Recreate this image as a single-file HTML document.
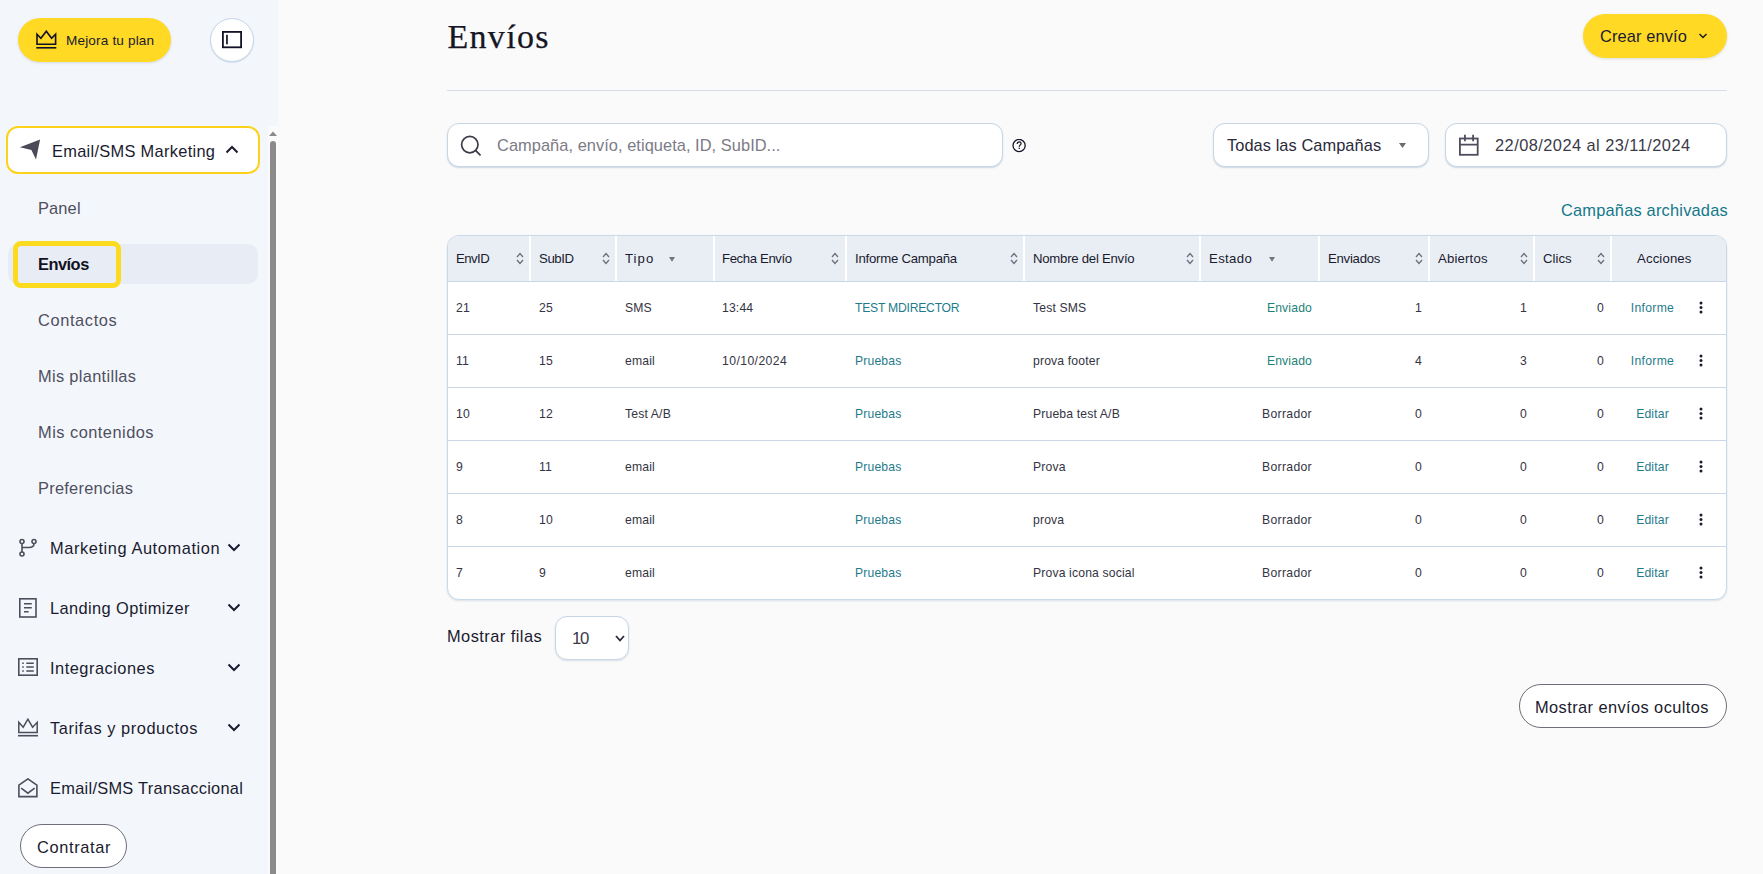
<!DOCTYPE html>
<html lang="es">
<head>
<meta charset="utf-8">
<title>Envíos</title>
<style>
*{box-sizing:border-box;margin:0;padding:0}
html,body{width:1763px;height:874px;overflow:hidden}
body{font-family:"Liberation Sans",sans-serif;background:#fafafa;color:#1b1b2f;position:relative}
.abs{position:absolute}
/* sidebar */
#side{position:absolute;left:0;top:0;width:278px;height:874px;background:#f3f7fc}
#plan{left:18px;top:18px;width:153px;height:44px;border-radius:22px;background:#ffd923;box-shadow:0 1px 3px rgba(0,0,0,.12)}
#plan span{position:absolute;left:48px;top:15px;font-size:13.6px;letter-spacing:.15px;color:#1b1b2f;white-space:nowrap}
#plan svg{position:absolute;left:18px;top:12px}
#tog{left:210px;top:18px;width:44px;height:44px;border-radius:50%;background:#fff;border:1px solid #c6d7e6;box-shadow:0 1px 1px rgba(140,170,200,.35)}
#tog svg{position:absolute;left:11px;top:12px}
#emk{left:6px;top:126px;width:254px;height:48px;border:2px solid #fdd21b;border-radius:12px;background:#fff}
.t16{font-size:16.4px;letter-spacing:.3px;white-space:nowrap}
.sub{position:absolute;left:38px;font-size:16.4px;letter-spacing:.4px;color:#4f4f60;white-space:nowrap}
#act{left:8px;top:244px;width:250px;height:40px;border-radius:10px;background:#e8edf5}
#focus{left:13px;top:241px;width:108px;height:47px;border:5px solid #fcdb1f;border-radius:8px}
.sec{position:absolute;left:0;width:260px;height:30px}
.sec .ic{position:absolute;left:18px;top:5px}
.sec .lb{position:absolute;left:50px;top:6px;font-size:16.4px;letter-spacing:.55px;color:#1b1b2f;white-space:nowrap}
.sec .chev{position:absolute;left:227px;top:10px}
#contr{left:20px;top:824px;width:107px;height:44px;border-radius:22px;background:#fff;border:1px solid #6e6e78}
#contr span{position:absolute;left:16px;top:13px;font-size:16.4px;letter-spacing:.65px;color:#1b1b2f}
#track{left:268px;top:126px;width:10px;height:748px;background:#fbfbfb}
#thumb{left:270px;top:141px;width:6px;height:740px;border-radius:3px;background:#8a8a8a}
/* main */
#title{left:447.5px;top:18px;-webkit-text-stroke:.25px #161625;font-family:"Liberation Serif",serif;font-size:34px;color:#161625;white-space:nowrap;letter-spacing:1.3px}
#crear{left:1583px;top:14px;width:144px;height:44px;border-radius:22px;background:#ffd923;box-shadow:0 1px 3px rgba(0,0,0,.12)}
#crear span{position:absolute;left:17px;top:13px}
#crear svg{position:absolute;left:115px;top:19px}
#hr{left:447px;top:90px;width:1280px;height:1px;background:#d6dee8}
.box{position:absolute;top:123px;height:44px;background:#fff;border:1px solid #c6d6e6;border-radius:12px;box-shadow:0 1px 1.5px rgba(120,150,180,.35)}
#search{left:447px;width:556px}
#camp{left:1213px;width:216px}
#date{left:1445px;width:282px}
#arch{left:1561px;top:201px;color:#13788a;letter-spacing:.2px}
/* table */
#tbl{left:447px;top:235px;width:1280px;height:365px;background:#fff;border:1px solid #c9d9e7;border-radius:12px;overflow:hidden;box-shadow:0 1px 2px rgba(120,150,180,.25)}
#thead{position:absolute;left:0;top:0;width:100%;height:46px;background:#e9eef5;border-bottom:1px solid #c9d7e6}
.sep{position:absolute;top:0;width:2px;height:45px;background:#fff}
.th{position:absolute;top:15px;font-size:13.2px;color:#1b1b2f;white-space:nowrap}
.row{position:absolute;left:0;width:100%;height:53px;border-bottom:1px solid #c9d7e6}
.td{position:absolute;top:19px;font-size:12.2px;letter-spacing:.15px;color:#343443;white-space:nowrap}
.link{color:#1f7b8c}
.ok{color:#1d8277}
</style>
</head>
<body>
<div id="side">
  <div id="plan" class="abs">
    <svg width="21" height="20" viewBox="0 0 21 20"><path d="M1 4.2 L4.9 8.2 L10.3 1.2 L15.6 8.2 L19.6 4.2 V14.2 H1 Z" fill="none" stroke="#121226" stroke-width="1.6" stroke-linejoin="miter" stroke-miterlimit="10"/><rect x="0.3" y="17" width="20" height="1.6" fill="#121226"/></svg>
    <span>Mejora tu plan</span>
  </div>
  <div id="tog" class="abs">
    <svg width="21" height="19" viewBox="0 0 21 19"><rect x="0.9" y="0.9" width="18.2" height="15.4" fill="none" stroke="#121226" stroke-width="1.8"/><rect x="4.1" y="3.8" width="1.7" height="9.5" fill="#121226"/></svg>
  </div>
  <div id="emk" class="abs">
    <svg class="abs" style="left:10px;top:11px" width="24" height="22" viewBox="0 0 24 22"><path d="M1.9 8.3 L22.1 0.6 L18 20.5 L13.4 10.9 Z" fill="#4a4a58"/></svg>
    <span class="abs t16" style="left:44px;top:14px;color:#1b1b2f">Email/SMS Marketing</span>
    <svg class="abs" style="left:217px;top:17px" width="14" height="9" viewBox="0 0 14 9"><path d="M1.5 7.5 L7 2 L12.5 7.5" fill="none" stroke="#1b1b2f" stroke-width="2"/></svg>
  </div>
  <span class="sub" style="top:199px;letter-spacing:.15px">Panel</span>
  <div id="act" class="abs"></div>
  <div id="focus" class="abs"></div>
  <span class="sub" style="top:255px;color:#111122;font-weight:700;letter-spacing:-.5px">Envíos</span>
  <span class="sub" style="top:311px;letter-spacing:.62px">Contactos</span>
  <span class="sub" style="top:367px;letter-spacing:.32px">Mis plantillas</span>
  <span class="sub" style="top:423px;letter-spacing:.48px">Mis contenidos</span>
  <span class="sub" style="top:479px;letter-spacing:.26px">Preferencias</span>

  <div class="sec" style="top:533px">
    <svg class="ic" width="20" height="20" viewBox="0 0 20 20"><circle cx="4" cy="3.5" r="2" fill="none" stroke="#4d4d5c" stroke-width="1.6"/><circle cx="16" cy="3.5" r="2" fill="none" stroke="#4d4d5c" stroke-width="1.6"/><circle cx="4" cy="16" r="2" fill="none" stroke="#4d4d5c" stroke-width="1.6"/><path d="M4 5.5 V14 M16 5.5 C16 9 14 9.5 11 9.5 H4" fill="none" stroke="#4d4d5c" stroke-width="1.6"/></svg>
    <span class="lb" style="letter-spacing:.58px">Marketing Automation</span>
    <svg class="chev" width="14" height="9" viewBox="0 0 14 9"><path d="M1.5 1.5 L7 7 L12.5 1.5" fill="none" stroke="#1b1b2f" stroke-width="2"/></svg>
  </div>
  <div class="sec" style="top:593px">
    <svg class="ic" width="20" height="20" viewBox="0 0 20 20"><rect x="1.8" y="0.8" width="16.2" height="18.2" fill="none" stroke="#4d4d5c" stroke-width="1.6"/><path d="M6 5.8 H13.8 M6 9.8 H13.8 M6 13.8 H10.6" stroke="#4d4d5c" stroke-width="1.6"/></svg>
    <span class="lb" style="letter-spacing:.4px">Landing Optimizer</span>
    <svg class="chev" width="14" height="9" viewBox="0 0 14 9"><path d="M1.5 1.5 L7 7 L12.5 1.5" fill="none" stroke="#1b1b2f" stroke-width="2"/></svg>
  </div>
  <div class="sec" style="top:653px">
    <svg class="ic" width="21" height="20" viewBox="0 0 21 20"><rect x="0.8" y="0.8" width="18.4" height="16.4" fill="none" stroke="#4d4d5c" stroke-width="1.6"/><path d="M4.2 5.3 H5.8 M4.2 9.1 H5.8 M4.2 12.9 H5.8 M8.3 5.3 H15.8 M8.3 9.1 H15.8 M8.3 12.9 H15.8" stroke="#4d4d5c" stroke-width="1.5"/></svg>
    <span class="lb" style="letter-spacing:.5px">Integraciones</span>
    <svg class="chev" width="14" height="9" viewBox="0 0 14 9"><path d="M1.5 1.5 L7 7 L12.5 1.5" fill="none" stroke="#1b1b2f" stroke-width="2"/></svg>
  </div>
  <div class="sec" style="top:713px">
    <svg class="ic" width="21" height="20" viewBox="0 0 21 20"><path d="M0.8 4.3 L5.2 9.2 L9.9 1.2 L14.6 9.2 L19.2 4.3 V14.6 H0.8 Z" fill="none" stroke="#4d4d5c" stroke-width="1.5" stroke-miterlimit="10"/><rect x="0" y="16.9" width="20" height="1.6" fill="#4d4d5c"/></svg>
    <span class="lb" style="letter-spacing:.55px">Tarifas y productos</span>
    <svg class="chev" width="14" height="9" viewBox="0 0 14 9"><path d="M1.5 1.5 L7 7 L12.5 1.5" fill="none" stroke="#1b1b2f" stroke-width="2"/></svg>
  </div>
  <div class="sec" style="top:773px">
    <svg class="ic" width="21" height="21" viewBox="0 0 21 21"><path d="M0.9 7.2 L9.9 0.9 L18.9 7.2 V18.6 H0.9 Z" fill="none" stroke="#4d4d5c" stroke-width="1.6" stroke-linejoin="miter"/><path d="M3.2 10.2 L9.9 15.2 L16.6 10.2" fill="none" stroke="#4d4d5c" stroke-width="1.6"/></svg>
    <span class="lb" style="letter-spacing:.28px">Email/SMS Transaccional</span>
  </div>
  <div id="contr" class="abs"><span>Contratar</span></div>
  <div id="track" class="abs"></div>
  <svg class="abs" style="left:269px;top:131px" width="8" height="5" viewBox="0 0 8 5"><path d="M0 5 L4 0.5 L8 5 Z" fill="#8a8a8a"/></svg>
  <div id="thumb" class="abs"></div>
</div>

<div id="main">
  <div id="title" class="abs">Envíos</div>
  <div id="crear" class="abs"><span class="t16" style="letter-spacing:.12px">Crear envío</span>
    <svg width="10" height="6" viewBox="0 0 10 6"><path d="M1.5 1 L5 4.5 L8.5 1" fill="none" stroke="#1b1b2f" stroke-width="1.5"/></svg>
  </div>
  <div id="hr" class="abs"></div>

  <div id="search" class="box">
    <svg class="abs" style="left:12px;top:11px" width="22" height="22" viewBox="0 0 22 22"><circle cx="9.8" cy="9.6" r="8.2" fill="none" stroke="#3c3c48" stroke-width="1.7"/><path d="M15.8 15.6 L20 19.8" stroke="#3c3c48" stroke-width="1.8" stroke-linecap="round"/></svg>
    <span class="abs t16" style="left:49px;top:12px;color:#7b7b86;letter-spacing:.05px">Campaña, envío, etiqueta, ID, SubID...</span>
  </div>
  <svg class="abs" style="left:1012px;top:139px" width="15" height="14" viewBox="0 0 15 14"><circle cx="7.1" cy="6.5" r="6.1" fill="none" stroke="#121226" stroke-width="1.25"/><path d="M5.2 5 C5.2 3.6 6.1 2.9 7.2 2.9 C8.3 2.9 9.1 3.6 9.1 4.6 C9.1 5.9 7.3 6 7.3 7.7" fill="none" stroke="#121226" stroke-width="1.2"/><rect x="6.6" y="8.7" width="1.3" height="1.2" fill="#121226"/></svg>
  <div id="camp" class="box">
    <span class="abs t16" style="left:13px;top:12px;color:#2a2a3a;letter-spacing:.06px">Todas las Campañas</span>
    <svg class="abs" style="left:185px;top:19px" width="7" height="5" viewBox="0 0 7 5"><path d="M0 0 H7 L3.5 5 Z" fill="#6b6b76"/></svg>
  </div>
  <div id="date" class="box">
    <svg class="abs" style="left:13px;top:10px" width="22" height="24" viewBox="0 0 22 24"><rect x="0.9" y="4.5" width="17.8" height="16.3" fill="none" stroke="#4d4d5c" stroke-width="1.8"/><path d="M0.9 10.7 H18.7 M5.9 0.8 V7.3 M14.1 0.8 V7.3" stroke="#4d4d5c" stroke-width="1.8"/></svg>
    <span class="abs t16" style="left:49px;top:12px;color:#3a3a48;letter-spacing:.45px">22/08/2024 al 23/11/2024</span>
  </div>
  <span id="arch" class="abs t16">Campañas archivadas</span>
<div id="tbl" class="abs">
<div id="thead">
<div class="sep" style="left:81px"></div><div class="sep" style="left:167px"></div><div class="sep" style="left:265px"></div><div class="sep" style="left:397px"></div><div class="sep" style="left:575px"></div><div class="sep" style="left:751px"></div><div class="sep" style="left:870px"></div><div class="sep" style="left:980px"></div><div class="sep" style="left:1085px"></div><div class="sep" style="left:1162px"></div>
<span class="th" style="left:8px;letter-spacing:-0.55px">EnvID</span><svg class="abs" style="left:68px;top:16px" width="8" height="13" viewBox="0 0 8 13"><path d="M1 5 L4 1.5 L7 5 M1 8 L4 11.5 L7 8" fill="none" stroke="#6e6e7a" stroke-width="1.3"/></svg>
<span class="th" style="left:91px;letter-spacing:-0.42px">SubID</span><svg class="abs" style="left:154px;top:16px" width="8" height="13" viewBox="0 0 8 13"><path d="M1 5 L4 1.5 L7 5 M1 8 L4 11.5 L7 8" fill="none" stroke="#6e6e7a" stroke-width="1.3"/></svg>
<span class="th" style="left:177px;letter-spacing:1.03px">Tipo</span><svg class="abs" style="left:221px;top:20.5px" width="6" height="5" viewBox="0 0 6 5"><path d="M0 0 H6 L3 4.8 Z" fill="#75757f"/></svg>
<span class="th" style="left:274px;letter-spacing:-0.39px">Fecha Envío</span><svg class="abs" style="left:383px;top:16px" width="8" height="13" viewBox="0 0 8 13"><path d="M1 5 L4 1.5 L7 5 M1 8 L4 11.5 L7 8" fill="none" stroke="#6e6e7a" stroke-width="1.3"/></svg>
<span class="th" style="left:407px;letter-spacing:-0.24px">Informe Campaña</span><svg class="abs" style="left:562px;top:16px" width="8" height="13" viewBox="0 0 8 13"><path d="M1 5 L4 1.5 L7 5 M1 8 L4 11.5 L7 8" fill="none" stroke="#6e6e7a" stroke-width="1.3"/></svg>
<span class="th" style="left:585px;letter-spacing:-0.26px">Nombre del Envío</span><svg class="abs" style="left:738px;top:16px" width="8" height="13" viewBox="0 0 8 13"><path d="M1 5 L4 1.5 L7 5 M1 8 L4 11.5 L7 8" fill="none" stroke="#6e6e7a" stroke-width="1.3"/></svg>
<span class="th" style="left:761px;letter-spacing:0.34px">Estado</span><svg class="abs" style="left:821px;top:20.5px" width="6" height="5" viewBox="0 0 6 5"><path d="M0 0 H6 L3 4.8 Z" fill="#75757f"/></svg>
<span class="th" style="left:880px;letter-spacing:-0.26px">Enviados</span><svg class="abs" style="left:967px;top:16px" width="8" height="13" viewBox="0 0 8 13"><path d="M1 5 L4 1.5 L7 5 M1 8 L4 11.5 L7 8" fill="none" stroke="#6e6e7a" stroke-width="1.3"/></svg>
<span class="th" style="left:990px;letter-spacing:0.16px">Abiertos</span><svg class="abs" style="left:1072px;top:16px" width="8" height="13" viewBox="0 0 8 13"><path d="M1 5 L4 1.5 L7 5 M1 8 L4 11.5 L7 8" fill="none" stroke="#6e6e7a" stroke-width="1.3"/></svg>
<span class="th" style="left:1095px;letter-spacing:0px">Clics</span><svg class="abs" style="left:1149px;top:16px" width="8" height="13" viewBox="0 0 8 13"><path d="M1 5 L4 1.5 L7 5 M1 8 L4 11.5 L7 8" fill="none" stroke="#6e6e7a" stroke-width="1.3"/></svg>
<span class="th" style="left:1189px;letter-spacing:0.13px">Acciones</span>
</div>
<div class="row" style="top:46px"><span class="td" style="left:8px">21</span><span class="td" style="left:91px">25</span><span class="td" style="left:177px">SMS</span><span class="td" style="left:274px">13:44</span><span class="td link" style="left:407px;letter-spacing:-.25px">TEST MDIRECTOR</span><span class="td" style="left:585px">Test SMS</span><span class="td ok" style="right:414px">Enviado</span><span class="td" style="right:304px">1</span><span class="td" style="right:199px">1</span><span class="td" style="right:122px">0</span><span class="td link" style="left:1164.5px;width:80px;text-align:center;letter-spacing:.3px">Informe</span><svg class="abs" style="left:1251px;top:19px" width="4" height="13" viewBox="0 0 4 13"><circle cx="2" cy="2" r="1.5" fill="#1b1b2f"/><circle cx="2" cy="6.5" r="1.5" fill="#1b1b2f"/><circle cx="2" cy="11" r="1.5" fill="#1b1b2f"/></svg></div>
<div class="row" style="top:99px"><span class="td" style="left:8px">11</span><span class="td" style="left:91px">15</span><span class="td" style="left:177px">email</span><span class="td" style="left:274px;letter-spacing:.42px">10/10/2024</span><span class="td link" style="left:407px">Pruebas</span><span class="td" style="left:585px">prova footer</span><span class="td ok" style="right:414px">Enviado</span><span class="td" style="right:304px">4</span><span class="td" style="right:199px">3</span><span class="td" style="right:122px">0</span><span class="td link" style="left:1164.5px;width:80px;text-align:center;letter-spacing:.3px">Informe</span><svg class="abs" style="left:1251px;top:19px" width="4" height="13" viewBox="0 0 4 13"><circle cx="2" cy="2" r="1.5" fill="#1b1b2f"/><circle cx="2" cy="6.5" r="1.5" fill="#1b1b2f"/><circle cx="2" cy="11" r="1.5" fill="#1b1b2f"/></svg></div>
<div class="row" style="top:152px"><span class="td" style="left:8px">10</span><span class="td" style="left:91px">12</span><span class="td" style="left:177px">Test A/B</span><span class="td link" style="left:407px">Pruebas</span><span class="td" style="left:585px">Prueba test A/B</span><span class="td" style="right:414px;letter-spacing:.33px">Borrador</span><span class="td" style="right:304px">0</span><span class="td" style="right:199px">0</span><span class="td" style="right:122px">0</span><span class="td link" style="left:1164.5px;width:80px;text-align:center">Editar</span><svg class="abs" style="left:1251px;top:19px" width="4" height="13" viewBox="0 0 4 13"><circle cx="2" cy="2" r="1.5" fill="#1b1b2f"/><circle cx="2" cy="6.5" r="1.5" fill="#1b1b2f"/><circle cx="2" cy="11" r="1.5" fill="#1b1b2f"/></svg></div>
<div class="row" style="top:205px"><span class="td" style="left:8px">9</span><span class="td" style="left:91px">11</span><span class="td" style="left:177px">email</span><span class="td link" style="left:407px">Pruebas</span><span class="td" style="left:585px">Prova</span><span class="td" style="right:414px;letter-spacing:.33px">Borrador</span><span class="td" style="right:304px">0</span><span class="td" style="right:199px">0</span><span class="td" style="right:122px">0</span><span class="td link" style="left:1164.5px;width:80px;text-align:center">Editar</span><svg class="abs" style="left:1251px;top:19px" width="4" height="13" viewBox="0 0 4 13"><circle cx="2" cy="2" r="1.5" fill="#1b1b2f"/><circle cx="2" cy="6.5" r="1.5" fill="#1b1b2f"/><circle cx="2" cy="11" r="1.5" fill="#1b1b2f"/></svg></div>
<div class="row" style="top:258px"><span class="td" style="left:8px">8</span><span class="td" style="left:91px">10</span><span class="td" style="left:177px">email</span><span class="td link" style="left:407px">Pruebas</span><span class="td" style="left:585px">prova</span><span class="td" style="right:414px;letter-spacing:.33px">Borrador</span><span class="td" style="right:304px">0</span><span class="td" style="right:199px">0</span><span class="td" style="right:122px">0</span><span class="td link" style="left:1164.5px;width:80px;text-align:center">Editar</span><svg class="abs" style="left:1251px;top:19px" width="4" height="13" viewBox="0 0 4 13"><circle cx="2" cy="2" r="1.5" fill="#1b1b2f"/><circle cx="2" cy="6.5" r="1.5" fill="#1b1b2f"/><circle cx="2" cy="11" r="1.5" fill="#1b1b2f"/></svg></div>
<div class="row" style="top:311px"><span class="td" style="left:8px">7</span><span class="td" style="left:91px">9</span><span class="td" style="left:177px">email</span><span class="td link" style="left:407px">Pruebas</span><span class="td" style="left:585px">Prova icona social</span><span class="td" style="right:414px;letter-spacing:.33px">Borrador</span><span class="td" style="right:304px">0</span><span class="td" style="right:199px">0</span><span class="td" style="right:122px">0</span><span class="td link" style="left:1164.5px;width:80px;text-align:center">Editar</span><svg class="abs" style="left:1251px;top:19px" width="4" height="13" viewBox="0 0 4 13"><circle cx="2" cy="2" r="1.5" fill="#1b1b2f"/><circle cx="2" cy="6.5" r="1.5" fill="#1b1b2f"/><circle cx="2" cy="11" r="1.5" fill="#1b1b2f"/></svg></div>
</div>
<span class="abs t16" style="left:447px;top:627px;color:#1b1b2f;letter-spacing:.45px">Mostrar filas</span>
<div class="abs" style="left:555px;top:616px;width:74px;height:44px;background:#fff;border:1px solid #c6d6e6;border-radius:12px;box-shadow:0 1px 2px rgba(120,150,180,.25)">
  <span class="abs" style="left:16px;top:12px;font-size:16.8px;letter-spacing:-1.3px;color:#3a3a48">10</span>
  <svg class="abs" style="left:59px;top:18px" width="10" height="7" viewBox="0 0 10 7"><path d="M1 1 L5 5.5 L9 1" fill="none" stroke="#2a2a3a" stroke-width="1.8"/></svg>
</div>
<div class="abs" style="left:1519px;top:684px;width:208px;height:44px;background:#fff;border:1px solid #6e6e78;border-radius:22px">
  <span class="abs t16" style="left:15px;top:13px;color:#1b1b2f;letter-spacing:.41px">Mostrar envíos ocultos</span>
</div>
</div>
</body>
</html>
